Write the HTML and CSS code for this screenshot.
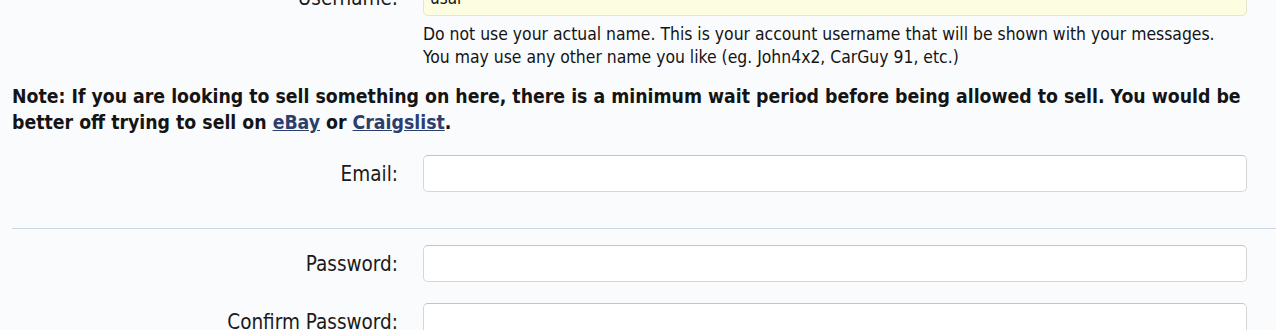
FILE: index.html
```html
<!DOCTYPE html>
<html lang="en">
<head>
  <meta charset="UTF-8">
  <title>Register</title>
  <link rel="stylesheet" href="styles.css">
</head>
<body>
  <form class="register">
    <div class="row">
      <label class="label" for="username">Username:</label>
      <div class="field">
        <input class="text filled" id="username" type="text" value="usar">
        <p class="hint">Do not use your actual name. This is your account username that will be shown with your messages.<br>You may use any other name you like (eg. John4x2, CarGuy 91, etc.)</p>
      </div>
    </div>

    <p class="note">Note: If you are looking to sell something on here, there is a minimum wait period before being allowed to sell. You would be better off trying to sell on <a href="#">eBay</a> or <a href="#">Craigslist</a>.</p>

    <div class="row">
      <label class="label" for="email">Email:</label>
      <div class="field">
        <input class="text" id="email" type="email">
      </div>
    </div>

    <hr class="divider">

    <div class="row">
      <label class="label" for="password">Password:</label>
      <div class="field">
        <input class="text" id="password" type="password">
      </div>
    </div>

    <div class="row">
      <label class="label" for="confirm">Confirm Password:</label>
      <div class="field">
        <input class="text" id="confirm" type="password">
      </div>
    </div>
  </form>
</body>
</html>
```

FILE: styles.css
```css
body {
  margin: 0;
  background-color: #fafbfd;
  font-family: 'DejaVu Sans Condensed', 'DejaVu Sans', sans-serif;
  font-size: 17px;
  color: #141414;
  overflow: hidden;
}

.register {
  margin-top: -21px;
  padding-left: 12px;
}

.row {
  display: grid;
  grid-template-columns: 386px 824px;
  column-gap: 25px;
  margin-bottom: 21px;
}

.label {
  text-align: right;
  padding-top: 7px;
  font-size: 20.5px;
  line-height: 24px;
  color: #1a1a1a;
}

.text {
  display: block;
  box-sizing: border-box;
  width: 100%;
  height: 37px;
  margin: 0;
  padding: 4px 6px;
  border: 1px solid #d6d6d6;
  border-top-color: #c4c4c4;
  border-radius: 5px;
  background: #fff;
  font: inherit;
  color: #141414;
}

.text.filled {
  background: #fdfde1;
  border-color: #e6e6cc;
}

.hint {
  margin: 7px 0 0;
  line-height: 23px;
  font-size: 17.4px;
}

.note {
  margin: -6px 0 19px;
  font-weight: bold;
  font-size: 19.3px;
  line-height: 26px;
}

.note a {
  color: #2c3e6e;
}

.divider {
  border: 0;
  border-top: 1px solid #c9d8e4;
  margin: 36px 0 16px;
}
```
